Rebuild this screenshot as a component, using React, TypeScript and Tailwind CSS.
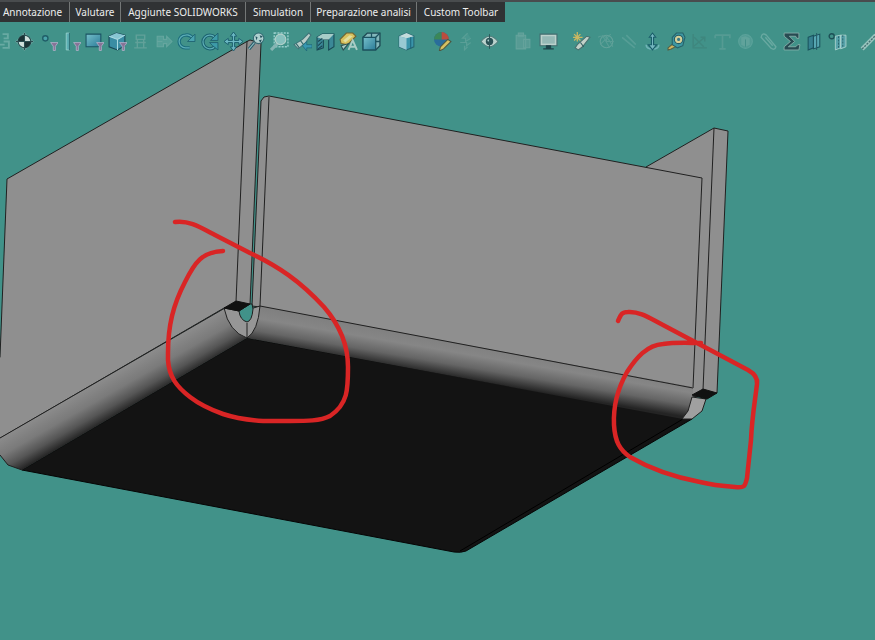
import type { ReactNode } from "react";

const tabs = [
  { label: "Annotazione", width: "w-[70px] pr-1" },
  { label: "Valutare", width: "w-[51px]" },
  { label: "Aggiunte SOLIDWORKS", width: "w-[125px]" },
  { label: "Simulation", width: "w-[65px]" },
  { label: "Preparazione analisi", width: "w-[106px]" },
  { label: "Custom Toolbar", width: "w-[88px]" },
];

const funnel = <path d="M11 10h7l-2.500 3.500v4h-2v-4z" fill="#8f6f98" stroke="#c3bdd6" strokeWidth=".7" />;

type Tool = { name: string; gap?: string; faded?: boolean; icon: ReactNode };

const tools: Tool[] = [
  { name: "Sketch", gap: "-ml-[10px]", faded: true, icon: <path d="M10 2h5v4h-4M11 9h5v6h-6M7 12h5" fill="none" stroke="#a4d0ca" strokeWidth="1.8" /> },
  {
    name: "Center of mass",
    icon: (
      <>
        <path d="m9 0 2 2 5 5 2 2-9 9-9-9z" fill="#7fa9a6" opacity=".6" />
        <circle cx="9" cy="9" r="6" fill="#dfe9e6" stroke="#23464a" />
        <path d="M9 9V3a6 6 0 0 0-6 6zM9 9v6a6 6 0 0 0 6-6z" fill="#17282d" />
        <path d="M9 1v16M1 9h16" stroke="#28464b" strokeWidth="1" />
      </>
    ),
  },
  { name: "Filter vertices", gap: "ml-px", icon: <><circle cx="6" cy="6" r="2.500" fill="#4ba5ad" stroke="#1d5965" strokeWidth="1.300" />{funnel}</> },
  { name: "Filter edges", icon: <><path d="M4 1h3v16H4z" fill="#5fb4b9" stroke="#a4d9d6" strokeWidth=".8" /><path d="M7 1v16" stroke="#276670" />{funnel}</> },
  { name: "Filter faces", icon: <><path d="M1 2h14v12H1z" fill="url(#blue)" stroke="#174d60" />{funnel}</> },
  {
    name: "Filter bodies",
    icon: (
      <>
        <path d="m1 4 7-3 8 2v10l-7 4-8-3z" fill="#3a8da7" stroke="#153f51" />
        <path d="m1 4 7-3 8 2-7 4z" fill="#8fccdc" />
        <path d="m1 4 8 3 7-4M9 7v10" fill="none" stroke="#b5e2ec" />
        {funnel}
      </>
    ),
  },
  { name: "Rebuild", faded: true, icon: <path d="M5 3h8v4H5zM4 10h10M6 7v8h6V7M3 15h12" fill="none" stroke="#91b8b3" strokeWidth="1.3" /> },
  { name: "Forward", faded: true, icon: <path d="M3 4h6v3h3V4l5 5-5 5v-3H9v3H3zM3 9h5" fill="#75b3ad" stroke="#9cc5c0" /> },
  { name: "Undo view", icon: <><path d="M12 15H8A6 6 0 0 1 8 3q4-1 7 3" fill="none" stroke="#19697d" strokeWidth="3.2" /><path d="M12 15H8A6 6 0 0 1 8 3q4-1 7 3" fill="none" stroke="#5fb0ba" strokeWidth="1.2" /><path d="M17 2v7h-7z" fill="#4ba5b5" stroke="#195b6d" strokeWidth=".8" /></> },
  { name: "Rotate view", icon: <><path d="M14 5a6.500 6.500 0 1 0 0 9" fill="none" stroke="#185d6e" strokeWidth="3.2" /><path d="M14 5a6.500 6.500 0 1 0 0 9" fill="none" stroke="#5fb0ba" strokeWidth="1.2" /><path d="M17 1v7h-7zM17 17v-7H9l3 3z" fill="#3d9cac" stroke="#195869" strokeWidth=".8" /></> },
  { name: "Pan", gap: "ml-px", icon: <path d="m9 0 3 4h-2v4h4V6l4 3-4 3v-2h-4v4h2l-3 4-3-4h2v-4H4v2L0 9l4-3v2h4V4H6z" fill="#70bdca" stroke="#17586a" strokeWidth=".9" /> },
  { name: "Zoom", icon: <><path d="m2 16 5-6" stroke="#1b5665" strokeWidth="3" /><path d="m2 16 5-6" stroke="#91c1c7" /><circle cx="11" cy="6" r="5" fill="#bcd8d8" stroke="#326771" /><path d="m8 4 2 1-1 3zM12 3l3 1-2 2zM11 8l3-1-1 3z" fill="#234e5c" /></> },
  { name: "Zoom to area", icon: <><path d="M4 1h13v13H4z" fill="none" stroke="#a1d6d4" strokeWidth="1.300" strokeDasharray="2 1" /><path d="m1 17 6-6" stroke="#8db9b8" strokeWidth="3" /><circle cx="10" cy="7" r="5" fill="#8fc7c4" stroke="#c2d8d2" /></> },
  { name: "Previous view", icon: <><path d="m1 12 8-5 6-6 2 2-5 7-7 6z" fill="#c5d4cf" stroke="#417379" /><path d="m7 8 3 4M3 11l3 4" stroke="#2c6167" /><path d="m9 13 4-4v3h5v3h-5v3z" fill="#3899b5" stroke="#175d73" strokeWidth=".6" /></> },
  { name: "Section view", icon: <><path d="m1 5 5-3h11v12l-5 3V7H7v8l-6 2z" fill="#3b8899" stroke="#154352" /><path d="m1 5 5-3h11l-5 5H7z" fill="#b3d3cf" /><path d="m2 9 4-3M2 13l4-4M2 16l4-3" stroke="#163c4b" /></> },
  { name: "Dynamic annotation", icon: <><path d="m1 7 6-6h6l3 3-8 8-6-1z" fill="#e8c75b" stroke="#755d28" /><path d="m4 8 6-5 3 1-7 6z" fill="#f4e8a0" /><path d="m2 13 7-2-5 6z" fill="#b5d3cc" stroke="#294b50" /><path d="m9 17 4-9 4 9M10 14h5" fill="none" stroke="#b5d3cc" strokeWidth="1.800" /></> },
  { name: "View orientation", icon: <><path d="M1 5 5 1h12v12l-4 4H1z" fill="#8bbcc1" stroke="#183f4c" strokeWidth="1.200" /><path d="M13 5v12H1V5z" fill="url(#blue)" stroke="#174d5d" strokeWidth="1.200" /><path d="m13 5 4-4M9 1v4M13 9h4" stroke="#174d5d" strokeWidth="1.200" /></> },
  { name: "Display style", gap: "ml-3", icon: <><path d="m2 4 7-3 7 3v10l-7 3-7-3z" fill="#3a95ae" stroke="#25606e" /><path d="m2 4 7 2v11l-7-3z" fill="#a3cfdc" /><path d="m2 4 7-3 7 3-7 2z" fill="#d2e5e6" /><path d="M13 5v11" stroke="#1a617b" /></> },
  { name: "Edit appearance", gap: "ml-[13px]", icon: <><circle cx="8" cy="7" r="7" fill="#27699d" /><path d="M8 7V0a7 7 0 0 1 7 7z" fill="#c94536" /><path d="M8 7H1a7 7 0 0 1 7-7z" fill="#3b8653" /><path d="m7 14 7-7 3 2-7 7-4 2z" fill="#e6c65d" stroke="#4d503a" /></> },
  { name: "Apply scene", faded: true, icon: <path d="m11 1-5 5h3v3l5-3M4 10h6v3l4-3M8 13v4l3-3" fill="#559f98" stroke="#80b4ac" /> },
  { name: "Hide/show items", gap: "ml-px", icon: <><path d="M1 9q8-10 16 0-8 10-16 0z" fill="#c8dad5" stroke="#537d7c" /><circle cx="9" cy="9" r="3.500" fill="#284b50" /><circle cx="8" cy="8" r="1" fill="#b5d3d3" /><path d="M9 2v14" stroke="#2b5358" /></> },
  { name: "Copy", gap: "ml-[10px]", faded: true, icon: <path d="M3 3h9v13H3zM5 1h5v3H5zM10 7h6v8h-6z" fill="#79aaa6" stroke="#9bbdb9" /> },
  { name: "View settings", gap: "ml-[3px]", icon: <><path d="M1 2h16v11H1z" fill="#cad8d4" stroke="#45696e" /><path d="M3 4h12v7H3z" fill="#9fbebb" /><path d="M7 13h4v3H7zM4 16h10" fill="#1b3d45" stroke="#1b3d45" /></> },
  { name: "New sketch", gap: "ml-[10px]", icon: <><path d="m5 12 9-8 3 1-7 9-4 3-3-2z" fill="#d0d8cf" stroke="#496c6c" /><path d="m8 10 3 4" stroke="#2b5558" /><path d="M5 0v9M1 5h9M2 2l6 6M8 2 2 8" stroke="#d9bc5d" strokeWidth="1.2" /></> },
  { name: "Mesh", gap: "ml-0.5", faded: true, icon: <><circle cx="9" cy="9" r="6" fill="none" stroke="#96bab3" /><path d="M1 5c5-3 10 0 14 9M3 12 13 2M5 3l7 12M9 3v6h7" fill="none" stroke="#7eb1aa" /></> },
  { name: "Trim", faded: true, icon: <path d="m2 5 12 10M6 3l9 9" fill="none" stroke="#77b1ab" strokeWidth="1.5" /> },
  { name: "Smart dimension", icon: <><path d="M3 12q0 4 6 4t6-4" fill="none" stroke="#76b8bd" strokeWidth="1.500" /><path d="M9 1 6 5h2v7H5l4 5 4-5h-3V5h2z" fill="#7bbbc5" stroke="#145766" /></> },
  { name: "Measure", gap: "ml-px", icon: <><path d="m1 15 6-5 3 3-6 3-3 1z" fill="#dfba5d" stroke="#5a5b3c" /><path d="M5 5 9 1h6l2 4-2 8-5 2-5-3z" fill="#3d98a5" stroke="#245d66" /><circle cx="11" cy="7" r="4" fill="#e4d79b" stroke="#235660" /><circle cx="11" cy="7" r="1.500" fill="#3a7683" /></> },
  { name: "Coordinate system", faded: true, icon: <path d="M3 2v13h13M4 5l9 9M3 14l11-9M10 5h4v4" fill="none" stroke="#3d776f" strokeWidth="1.3" /> },
  { name: "Text", faded: true, icon: <path d="M2 3h14v3M9 3v13M6 16h6M2 6V3" fill="none" stroke="#74aaa4" strokeWidth="1.6" /> },
  { name: "Body", faded: true, icon: <><circle cx="9" cy="9" r="6.500" fill="#69aaa4" stroke="#83bbb5" /><path d="m5 5 4-1 4 2v6l-4 2-4-2z" fill="#90bdb8" /><path d="M9 7v7" stroke="#478b88" /></> },
  { name: "Attach", faded: true, icon: <path d="m2 5 9 10q4 3 5-1L7 3Q3 0 2 5zm4 0 7 8" fill="none" stroke="#a4ccc6" strokeWidth="1.300" /> },
  { name: "Equations", icon: <path d="M2 1h14v5h-2l-1-2H7l5 5-6 5h7l2-2h2l-1 5H2v-3l6-5-6-5z" fill="#25444d" stroke="#a0bfba" strokeWidth=".7" /> },
  { name: "Reference plane", icon: <><path d="m3 5 5-2v12l-5 2z" fill="#357f90" stroke="#174d5a" /><path d="m8 4 6-2v12l-6 2z" fill="#59a9b7" stroke="#174d5a" /><path d="M11 1v16" stroke="#235966" /></> },
  { name: "Reference axis", icon: <><circle cx="3.500" cy="4" r="2.400" fill="none" stroke="#194951" strokeWidth="1.3" /><path d="m7 4 5-1v12l-5 2zM12 3h5v11l-5 2z" fill="#5ca6af" stroke="#bbdcd8" strokeWidth=".8" /><path d="M10 4v12M14 3v11" stroke="#28616b" strokeDasharray="2 1" /></> },
  { name: "Line", gap: "ml-[9px]", icon: <><path d="m2 16 13-13" stroke="#a3cbc5" strokeWidth="4" /><path d="m2 16 13-13" stroke="#456e70" strokeWidth="1.300" strokeDasharray="2 1" /></> },
];

function Model() {
  return (
    <svg className="absolute inset-0 h-full w-full" viewBox="0 0 875 640" preserveAspectRatio="xMidYMin slice" role="img" aria-label="Sheet metal part with two marked corners">
      <defs>
        <linearGradient id="leftBend" gradientUnits="userSpaceOnUse" x1="120" y1="369" x2="140" y2="404">
          <stop stopColor="#8c8c8c" />
          <stop offset=".4" stopColor="#7a7a7a" />
          <stop offset=".7" stopColor="#555555" />
          <stop offset="1" stopColor="#1c1c1c" />
        </linearGradient>
        <linearGradient id="rightBend" gradientUnits="userSpaceOnUse" x1="400" y1="332" x2="394" y2="367">
          <stop stopColor="#808080" />
          <stop offset=".3" stopColor="#868686" />
          <stop offset=".65" stopColor="#656565" />
          <stop offset="1" stopColor="#242424" />
        </linearGradient>
      </defs>
      <g strokeLinejoin="round" strokeWidth="1">
        <path d="M646 167 714 128 728 131 717 393 692 397z" fill="#8f8f8f" stroke="#202020" />
        <path d="M714 128 703 390" stroke="#202020" />
        <path d="M261 101 264 97 269 96 702 178 693 388 260 307 252 306z" fill="#8f8f8f" stroke="#202020" />
        <path d="M269 97 260 306" stroke="#202020" />
        <path d="M7 179 246 42 250 40 261 43 250 305 224 308-3 440-3 362 0 357z" fill="#8f8f8f" stroke="#202020" />
        <path d="M247 41 236 302" stroke="#202020" />
        <path d="M247 338 692 419 466 551Q461 553 454 552L22 470z" fill="#131313" stroke="#050505" />
        <path d="m460 551 223-132" stroke="#000000" />
        <path d="M0 438 225 308 247 338 22 470 8 465-1 454z" fill="url(#leftBend)" />
        <path d="M0 438 225 308M0 455l8 10 14 5" fill="none" stroke="#202020" />
        <path d="m260 306 433 81v10l-4 14-6 8-436-81z" fill="url(#rightBend)" />
        <path d="m260 306 433 82" stroke="#202020" />
        <path d="M224 308Q229 332 247 338 258 331 260 306L250 309 239 311z" fill="#969696" stroke="#202020" />
        <path d="M250 304h2l1 5q-1 12-6 13-7-2-8-11z" fill="#419289" stroke="#202020" />
        <path d="M247 323v15" stroke="#202020" />
        <path d="m224 308 12-7 14 3-11 7z" fill="#111111" stroke="#111111" />
        <path d="m692 397 14 2-4 12-10 8h-10l6-8z" fill="#a0a0a0" stroke="#202020" />
        <path d="m692 395 11-6 14 4-10 6z" fill="#111111" stroke="#111111" />
      </g>
      <g fill="none" stroke="#d92525" strokeWidth="4.500" strokeLinecap="round" strokeLinejoin="round">
        <path d="M175 222C189 220 200 227 215 235L250 253C278 266 300 281 324 307 337 322 348 343 348 367 348 389 348 404 330 416 320 421 307 421 290 421H263C247 420 235 418 223 414 209 409 199 404 190 397 177 387 169 377 168 360V353C168 326 173 305 185 282 195 262 202 252 223 251" />
        <path d="M618 321C621 314 622 312 628 312 640 311 651 319 663 325L697 343 748 370C755 374 758 378 757 384 755 401 752 417 751 440L747 478C745 487 744 488 735 487 722 486 712 485 700 482 679 478 654 471 630 457 620 450 615 442 614 425 613 405 618 388 627 372 636 358 647 345 663 344 676 342 690 343 701 343" />
      </g>
    </svg>
  );
}

export default function App() {
  return (
    <div className="relative flex min-h-screen flex-col overflow-hidden bg-[#419289] font-['Noto_Sans','Open_Sans',sans-serif]">
      <Model />
      <header className="relative border-t-2 border-[#494c4e]">
        <nav aria-label="Command tabs" className="flex">
          {tabs.map((tab) => (
            <button key={tab.label} type="button" className={`${tab.width} h-5 shrink-0 border-r border-[#747777] bg-[#303234] text-center text-[10px] leading-5 whitespace-nowrap text-[#ededed] last:border-r-0`}>
              {tab.label}
            </button>
          ))}
        </nav>
      </header>
      <div role="toolbar" aria-label="View tools" className="relative mt-2 flex overflow-hidden">
        <svg className="absolute h-0 w-0" aria-hidden="true">
          <defs>
            <linearGradient id="blue" x2="1" y2="1">
              <stop stopColor="#7cc5d2" />
              <stop offset="1" stopColor="#28799a" />
            </linearGradient>
          </defs>
        </svg>
        {tools.map((tool) => (
          <button key={tool.name} type="button" aria-label={tool.name} className={`${tool.gap ?? ""} flex h-[23px] w-[23px] shrink-0 items-center justify-center`}>
            <svg viewBox="0 0 18 18" className={`h-[19px] w-[19px] ${tool.faded ? "opacity-40" : "opacity-90"}`}>
              {tool.icon}
            </svg>
          </button>
        ))}
      </div>
    </div>
  );
}
